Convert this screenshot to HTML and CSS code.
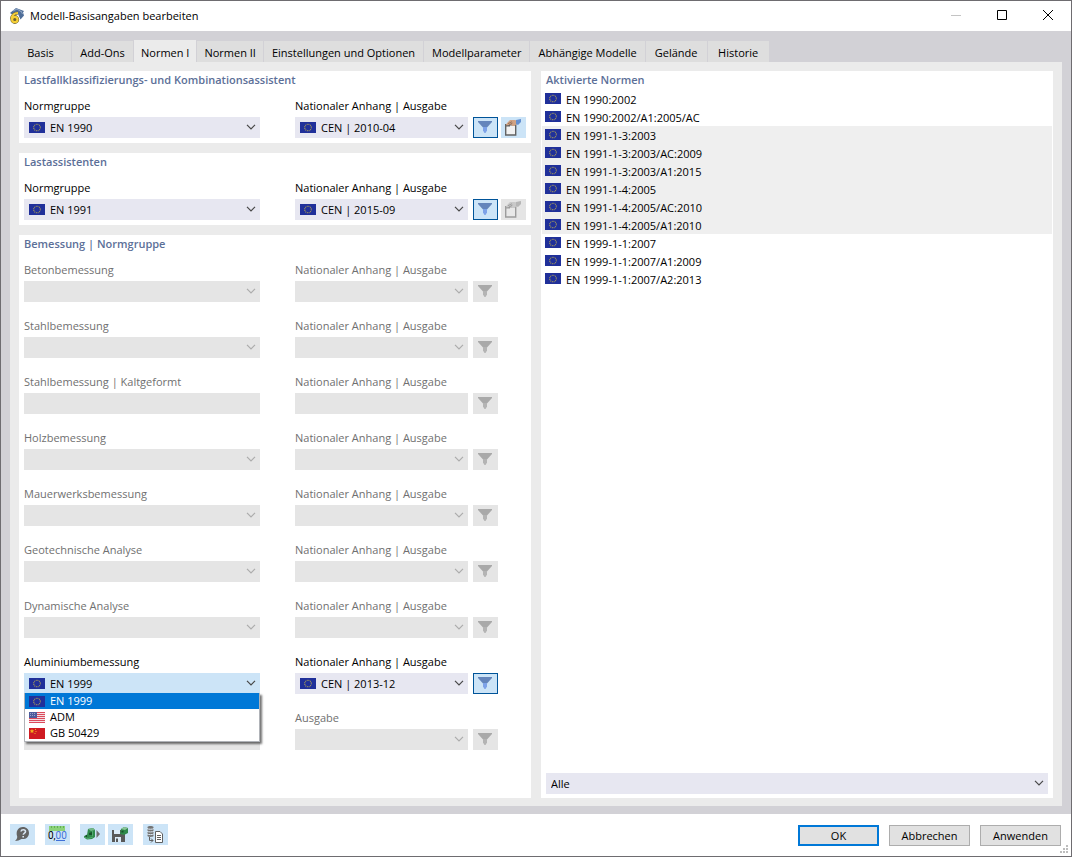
FILE: index.html
```html
<!DOCTYPE html>
<html lang="de">
<head>
<meta charset="utf-8">
<title>Modell-Basisangaben bearbeiten</title>
<link rel="stylesheet" href="styles.css">
</head>
<body>
<svg class="defs" aria-hidden="true">
  <symbol id="eu" viewBox="0 0 16 11"><path fill="#20309a" d="M0 0h16v11H0z"/><circle cx="8" cy="5.500" r="3.300" fill="none" stroke="#a89c58" stroke-width="1.100" stroke-dasharray="1 .73"/></symbol>
  <symbol id="us" viewBox="0 0 16 11"><path fill="#f3dfe2" d="M0 0h16v11H0z"/><path stroke="#dc4a5c" stroke-width="1" d="M0 .5h16M0 2.500h16M0 4.500h16M0 6.500h16M0 8.500h16M0 10.500h16"/><path fill="#4d5c9c" d="M0 0h8v6H0z"/><path stroke="#9aa3cb" stroke-dasharray="1 1" d="M1 1.500h6M1 3.500h6"/></symbol>
  <symbol id="cn" viewBox="0 0 16 11"><path fill="#cf1b22" d="M0 0h16v11H0z"/><path fill="#f2b01e" d="m3 1 .7 1.300 1.500.2-1.100 1 .3 1.500L3 4.300 1.600 5l.3-1.500-1.100-1 1.500-.2zM6 1h1v1H6zM6.500 3h1v1h-1zM5.500 5h1v1h-1z"/></symbol>
  <symbol id="chev" viewBox="0 0 10 6"><path d="M1 .8l4 4 4-4" fill="none" stroke="currentColor" stroke-width="1.200"/></symbol>
  <symbol id="filter" viewBox="0 0 14 12"><path d="M0 0h14v1L9 6.500H5L0 1z" fill="var(--funnel-top)"/><path d="M5 6h4v3.500L7.500 12h-1L5 9.500z" fill="var(--funnel-low)"/></symbol>
  <symbol id="hand" viewBox="0 0 18 17"><path d="M1.700 5.700h10v10.300h-10z" fill="var(--box)" stroke="var(--line)" stroke-width="1.400"/><path d="M1 5h5v2.500H1z" fill="var(--line)"/><path d="M3.500 3.500 6 1h4.500L13 1.500V5l-3 2H8L7.500 5.500 5 6 2.500 6.500 2 5.500z" fill="var(--skin)"/><path d="m4 4.700 4-2M5 6l3.500-2" stroke="var(--crease)" stroke-width=".7"/><path d="M12 1 17 0v3l-3 3-2-1z" fill="var(--cuff)"/></symbol>
</svg>
<div class="window">
  <header class="titlebar">
    <svg class="app-icon" viewBox="0 0 16 16"><path d="M1 5 7 0l8 3-1 1.500 1 3-3.500 4L9 6 4 7z" fill="#4f6e99"/><path d="M4 3 8 1l4 2.500M12 3l1.500 3" stroke="#93a9c7" fill="none"/><path d="M9 5C5.500 5 3 7.500 2.500 11" fill="none" stroke="#6b6232" stroke-width="3.200"/><circle cx="5.800" cy="11.500" r="2.700" fill="#6b6232" stroke="#6b6232" stroke-width="3.400"/><path d="M9 5C5.500 5 3 7.500 2.500 11" fill="none" stroke="#f5cf36" stroke-width="2.100"/><circle cx="5.800" cy="11.500" r="2.700" fill="#6b6232" stroke="#f5cf36" stroke-width="2.200"/></svg>
    <h1 class="caption">Modell-Basisangaben bearbeiten</h1>
    <button class="win-btn dim" aria-label="Minimieren" disabled><svg viewBox="0 0 10 10"><path d="M0 5.500h10"/></svg></button>
    <button class="win-btn" aria-label="Maximieren"><svg viewBox="0 0 10 10"><path d="M.5.5h9v9h-9z"/></svg></button>
    <button class="win-btn" aria-label="Schließen"><svg viewBox="0 0 10 10"><path d="m0 0 10 10M10 0 0 10"/></svg></button>
  </header>
  <main class="body">
    <nav class="tabs" role="tablist">
      <button class="tab" role="tab">Basis</button>
      <button class="tab" role="tab">Add-Ons</button>
      <button class="tab active" role="tab" aria-selected="true">Normen I</button>
      <button class="tab" role="tab">Normen II</button>
      <button class="tab wide" role="tab">Einstellungen und Optionen</button>
      <button class="tab wide" role="tab">Modellparameter</button>
      <button class="tab wide" role="tab">Abhängige Modelle</button>
      <button class="tab wide" role="tab">Gelände</button>
      <button class="tab wide" role="tab">Historie</button>
    </nav>
    <div class="page">
      <div class="column">
        <section class="group">
          <h2 class="heading">Lastfallklassifizierungs- und Kombinationsassistent</h2>
          <div class="fields">
            <div class="field"><label for="g1">Normgruppe</label>
              <div class="combo"><svg class="flag"><use href="#eu"/></svg><select id="g1" class="flagged"><option>EN 1990</option></select><svg class="chev"><use href="#chev"/></svg></div></div>
            <div class="field"><label for="a1">Nationaler Anhang | Ausgabe</label>
              <div class="line"><div class="combo"><svg class="flag"><use href="#eu"/></svg><select id="a1" class="flagged"><option>CEN | 2010-04</option></select><svg class="chev"><use href="#chev"/></svg></div>
              <button class="tool pressed" aria-label="Filter"><svg class="funnel"><use href="#filter"/></svg></button>
              <button class="tool" aria-label="Bearbeiten"><svg class="hand"><use href="#hand"/></svg></button></div></div>
          </div>
        </section>
        <section class="group">
          <h2 class="heading">Lastassistenten</h2>
          <div class="fields">
            <div class="field"><label for="g2">Normgruppe</label>
              <div class="combo"><svg class="flag"><use href="#eu"/></svg><select id="g2" class="flagged"><option>EN 1991</option></select><svg class="chev"><use href="#chev"/></svg></div></div>
            <div class="field"><label for="a2">Nationaler Anhang | Ausgabe</label>
              <div class="line"><div class="combo"><svg class="flag"><use href="#eu"/></svg><select id="a2" class="flagged"><option>CEN | 2015-09</option></select><svg class="chev"><use href="#chev"/></svg></div>
              <button class="tool pressed" aria-label="Filter"><svg class="funnel"><use href="#filter"/></svg></button>
              <button class="tool" aria-label="Bearbeiten" disabled><svg class="hand"><use href="#hand"/></svg></button></div></div>
          </div>
        </section>
        <section class="group grow">
          <h2 class="heading">Bemessung | Normgruppe</h2>
          <div class="fields">
            <div class="field off"><label for="g3">Betonbemessung</label>
              <div class="combo"><select id="g3" disabled></select><svg class="chev"><use href="#chev"/></svg></div></div>
            <div class="field off"><label for="a3">Nationaler Anhang | Ausgabe</label>
              <div class="line"><div class="combo"><select id="a3" disabled></select><svg class="chev"><use href="#chev"/></svg></div>
              <button class="tool" aria-label="Filter" disabled><svg class="funnel"><use href="#filter"/></svg></button></div></div>

            <div class="field off"><label for="g4">Stahlbemessung</label>
              <div class="combo"><select id="g4" disabled></select><svg class="chev"><use href="#chev"/></svg></div></div>
            <div class="field off"><label for="a4">Nationaler Anhang | Ausgabe</label>
              <div class="line"><div class="combo"><select id="a4" disabled></select><svg class="chev"><use href="#chev"/></svg></div>
              <button class="tool" aria-label="Filter" disabled><svg class="funnel"><use href="#filter"/></svg></button></div></div>

            <div class="field off"><label for="g5">Stahlbemessung | Kaltgeformt</label>
              <div class="combo"><select id="g5" disabled></select></div></div>
            <div class="field off"><label for="a5">Nationaler Anhang | Ausgabe</label>
              <div class="line"><div class="combo"><select id="a5" disabled></select></div>
              <button class="tool" aria-label="Filter" disabled><svg class="funnel"><use href="#filter"/></svg></button></div></div>

            <div class="field off"><label for="g6">Holzbemessung</label>
              <div class="combo"><select id="g6" disabled></select><svg class="chev"><use href="#chev"/></svg></div></div>
            <div class="field off"><label for="a6">Nationaler Anhang | Ausgabe</label>
              <div class="line"><div class="combo"><select id="a6" disabled></select><svg class="chev"><use href="#chev"/></svg></div>
              <button class="tool" aria-label="Filter" disabled><svg class="funnel"><use href="#filter"/></svg></button></div></div>

            <div class="field off"><label for="g7">Mauerwerksbemessung</label>
              <div class="combo"><select id="g7" disabled></select><svg class="chev"><use href="#chev"/></svg></div></div>
            <div class="field off"><label for="a7">Nationaler Anhang | Ausgabe</label>
              <div class="line"><div class="combo"><select id="a7" disabled></select><svg class="chev"><use href="#chev"/></svg></div>
              <button class="tool" aria-label="Filter" disabled><svg class="funnel"><use href="#filter"/></svg></button></div></div>

            <div class="field off"><label for="g8">Geotechnische Analyse</label>
              <div class="combo"><select id="g8" disabled></select><svg class="chev"><use href="#chev"/></svg></div></div>
            <div class="field off"><label for="a8">Nationaler Anhang | Ausgabe</label>
              <div class="line"><div class="combo"><select id="a8" disabled></select><svg class="chev"><use href="#chev"/></svg></div>
              <button class="tool" aria-label="Filter" disabled><svg class="funnel"><use href="#filter"/></svg></button></div></div>

            <div class="field off"><label for="g9">Dynamische Analyse</label>
              <div class="combo"><select id="g9" disabled></select><svg class="chev"><use href="#chev"/></svg></div></div>
            <div class="field off"><label for="a9">Nationaler Anhang | Ausgabe</label>
              <div class="line"><div class="combo"><select id="a9" disabled></select><svg class="chev"><use href="#chev"/></svg></div>
              <button class="tool" aria-label="Filter" disabled><svg class="funnel"><use href="#filter"/></svg></button></div></div>

            <div class="field"><label for="g10">Aluminiumbemessung</label>
              <div class="combo open"><svg class="flag"><use href="#eu"/></svg><select id="g10" class="flagged"><option>EN 1999</option><option>ADM</option><option>GB 50429</option></select><svg class="chev"><use href="#chev"/></svg>
                <ul class="menu" role="listbox" aria-label="Aluminiumbemessung">
                  <li class="choice selected" role="option" aria-selected="true"><svg><use href="#eu"/></svg>EN 1999</li>
                  <li class="choice" role="option"><svg><use href="#us"/></svg>ADM</li>
                  <li class="choice" role="option"><svg><use href="#cn"/></svg>GB 50429</li>
                </ul></div></div>
            <div class="field"><label for="a10">Nationaler Anhang | Ausgabe</label>
              <div class="line"><div class="combo"><svg class="flag"><use href="#eu"/></svg><select id="a10" class="flagged"><option>CEN | 2013-12</option></select><svg class="chev"><use href="#chev"/></svg></div>
              <button class="tool pressed" aria-label="Filter"><svg class="funnel"><use href="#filter"/></svg></button></div></div>

            <div class="field off bottom">
              <div class="combo"><select aria-label="Normgruppe" disabled></select></div></div>
            <div class="field off"><label for="a11">Ausgabe</label>
              <div class="line"><div class="combo"><select id="a11" disabled></select><svg class="chev"><use href="#chev"/></svg></div>
              <button class="tool" aria-label="Filter" disabled><svg class="funnel"><use href="#filter"/></svg></button></div></div>
          </div>
        </section>
      </div>
      <div class="column">
        <section class="group grow standards">
          <h2 class="heading">Aktivierte Normen</h2>
          <ul class="norms">
            <li><svg><use href="#eu"/></svg>EN 1990:2002</li>
            <li><svg><use href="#eu"/></svg>EN 1990:2002/A1:2005/AC</li>
            <li class="shade"><svg><use href="#eu"/></svg>EN 1991-1-3:2003</li>
            <li class="shade"><svg><use href="#eu"/></svg>EN 1991-1-3:2003/AC:2009</li>
            <li class="shade"><svg><use href="#eu"/></svg>EN 1991-1-3:2003/A1:2015</li>
            <li class="shade"><svg><use href="#eu"/></svg>EN 1991-1-4:2005</li>
            <li class="shade"><svg><use href="#eu"/></svg>EN 1991-1-4:2005/AC:2010</li>
            <li class="shade"><svg><use href="#eu"/></svg>EN 1991-1-4:2005/A1:2010</li>
            <li><svg><use href="#eu"/></svg>EN 1999-1-1:2007</li>
            <li><svg><use href="#eu"/></svg>EN 1999-1-1:2007/A1:2009</li>
            <li><svg><use href="#eu"/></svg>EN 1999-1-1:2007/A2:2013</li>
          </ul>
          <div class="combo"><select aria-label="Normen anzeigen"><option>Alle</option></select><svg class="chev"><use href="#chev"/></svg></div>
        </section>
      </div>
    </div>
  </main>
  <footer class="footer">
    <div class="icons">
      <button class="tool" aria-label="Hilfe"><svg viewBox="0 0 25 21"><path d="M5 17c2-2 2.300-3 2.200-4.500C5.500 7.500 8 3 12.800 3 16.500 3 19 5.500 19 9c0 4.200-3.500 6.700-7.500 6-2 1.300-4 2-6.500 2z" fill="#636363"/><path d="M11 7.500c.3-2.300 4.500-2.300 4.500 0 0 1.600-2.200 1.500-2.200 3.300M13.200 12v1.500" fill="none" stroke="#d9e6f2" stroke-width="1.600"/></svg></button>
      <button class="tool" aria-label="Einheiten und Dezimalstellen"><svg viewBox="0 0 25 21"><path d="M4 2h16v5H4z" fill="#8bd37a"/><path d="M6.500 2v2M9.500 2v2M12.500 2v2M15.500 2v2M18.500 2v2" stroke="#5ba64c" stroke-width=".8"/><path d="M11 16.500h9" stroke="#3f70d8"/><text class="digits" x="3" y="15">0,<tspan fill="#3f70d8">00</tspan></text></svg></button>
      <button class="tool" aria-label="Modell laden"><svg viewBox="0 0 25 21"><path d="m8 5 5-1 2 2v7l-3 2-5 .500-3-2V12l3-1z" fill="#2f8a4b"/><path d="m8 5 5-1 2 2-4 1z" fill="#74b887"/><path d="m5 12 2-1.500V14zM9 9l3-1v3H9z" fill="#17512b"/><path d="m4 13 4 1.500 5-1.500M12.500 7v5" fill="none" stroke="#5cb277" stroke-width=".8"/><path d="m16.500 6 3.500 4-3.500 4z" fill="#707070"/></svg></button>
      <button class="tool joined" aria-label="Als Standard speichern"><svg viewBox="0 0 25 21"><path d="M4 6h11l2 3v9H4z" fill="#595959"/><path d="M6 6h6v4H6zM7 13h6v5H7z" fill="#dcebf8"/><path d="M8 14.500h2V18H8z" fill="#595959"/><path d="m13 5 3-2 4 1v5l-4 2-4-1z" fill="#2f8a4b"/><path d="m13 5 3-2 4 1-3 2z" fill="#8bc59a"/><path d="m13.500 7 2-.5v2h-2z" fill="#17512b"/></svg></button>
      <button class="tool" aria-label="Daten übernehmen"><svg viewBox="0 0 25 21"><path d="M4.500 3c1-1.200 5-1.200 6 0v9c-1 1.200-5 1.200-6 0z" fill="#747474"/><path d="M4 4.500c1.500 1 5.500 1 7 0m-7 2.700c1.500 1 5.500 1 7 0m-7 2.700c1.500 1 5.500 1 7 0" fill="none" stroke="#dcebf8"/><path d="M6.500 13v3.500H10m-2-2 2 2-2 2" fill="none" stroke="#606060"/><path d="M12.500 7.500h4.500l2.500 2.500v8.500h-7z" fill="#fff" stroke="#606060"/><path d="M14 11.500h4m-4 2h4m-4 2h4" stroke="#606060"/></svg></button>
    </div>
    <div class="actions">
      <button class="action default">OK</button>
      <button class="action">Abbrechen</button>
      <button class="action">Anwenden</button>
    </div>
    <svg class="grip" viewBox="0 0 8 8"><path d="M6 0h2v2H6zM3 3h2v2H3zM6 3h2v2H6zM0 6h2v2H0zM3 6h2v2H3zM6 6h2v2H6z" fill="#bdbdbd"/></svg>
  </footer>
</div>
</body>
</html>
```
FILE: styles.css
```css
* { box-sizing: border-box; }

body {
  margin: 0;
  font: 11px/16px "Open Sans", "Noto Sans", sans-serif;
  color: #000;
}

button, select { font: inherit; color: inherit; margin: 0; }
svg { display: block; flex: none; }
.defs { position: absolute; width: 0; height: 0; }

.window {
  display: flex;
  flex-direction: column;
  min-height: 100vh;
  border: 1px solid #6e6c70;
  background: #fff;
}

.titlebar { display: flex; align-items: center; height: 30px; padding-left: 8px; }
.app-icon { width: 16px; height: 16px; }
.caption { flex: 1; margin: 0 0 0 5px; font-size: 11px; font-weight: 400; }
.win-btn { display: grid; place-items: center; width: 46px; height: 30px; padding: 0 0 2px; border: 0; background: none; }
.win-btn svg { width: 10px; height: 10px; fill: none; stroke: #000; overflow: visible; }
.win-btn.dim svg { stroke: #c4c4c4; }

.body { flex: 1; display: flex; flex-direction: column; padding: 9px 9px 8px; background: #d2d1d6; }
.tabs { display: flex; align-items: flex-end; gap: 1px; }
.tab { min-width: 61px; height: 21px; padding: 2px 7px 0; border: 0; background: #dedede; white-space: nowrap; }
.tab.wide { padding: 2px 8px 0; }
.tab.active { height: 22px; padding-top: 3px; background: #ebebeb; }

.page { flex: 1; display: flex; gap: 10px; padding: 9px 9px 8px; background: #ebebeb; }
.column { flex: 1; min-width: 0; display: flex; flex-direction: column; gap: 10px; }
.group { display: flex; flex-direction: column; padding: 0 5px 5px; background: #fff; }
.group.grow { flex: 1; }
.group.standards { padding-bottom: 4px; }
.heading { margin: 0; font-size: 11px; line-height: 18px; font-weight: 600; color: #5c6f98; }

.fields { display: grid; grid-template-columns: 236fr 231fr; gap: 16px 35px; margin-top: 9px; }
.field { min-width: 0; display: flex; flex-direction: column; gap: 3px; }
.field.off { color: #707070; }
.field.bottom { justify-content: flex-end; }
.line { display: grid; grid-template-columns: 1fr 25px 25px; gap: 3px; }
.line .combo { margin-right: 2px; }

.combo { position: relative; height: 21px; }
.combo select {
  width: 100%;
  height: 100%;
  padding: 0 24px 0 5px;
  border: 0;
  border-radius: 0;
  appearance: none;
  background: #e7e7f1;
}
.combo select.flagged { padding-left: 26px; }
.combo select:disabled { background: #e5e5e5; opacity: 1; }
.combo.open select { background: #cce4f7; }
.flag { position: absolute; left: 5px; top: 5px; width: 16px; height: 11px; pointer-events: none; }
.chev { position: absolute; right: 4px; top: 7px; width: 10px; height: 6px; color: #484848; pointer-events: none; }
.off .chev { color: #acacac; }

.menu {
  position: absolute;
  z-index: 1;
  top: 20px;
  left: 0;
  right: 0;
  margin: 0;
  padding: 0;
  list-style: none;
  border: 1px solid #b0b3b8;
  border-top: 0;
  background: #fff;
  box-shadow: 2px 2px 2px #0000008c;
}
.choice { display: flex; align-items: center; gap: 5px; padding-left: 4px; }
.choice svg { width: 16px; height: 11px; }
.choice.selected { background: #0078d7; color: #fff; }

.tool { height: 21px; width: 25px; padding: 0 1px 1px 0; display: grid; place-items: center; border: 0; background: #cce4f7; --funnel-top: #6485bb; --funnel-low: #7da2e8; --box: #f2f2f2; --line: #626262; --skin: #d1a384; --crease: #805f4c; --cuff: #648fd0; }
.tool:disabled { background: #e5e5e5; --funnel-top: #a9a9a9; --funnel-low: #b4b4b4; --box: #e8e8e8; --line: #9c9c9c; --skin: #c9c9c9; --crease: #8e8e8e; --cuff: #b6b6b6; }
.tool.pressed { border: 1px solid #005499; }
.funnel { width: 14px; height: 12px; }
.hand { width: 18px; height: 17px; }

.norms { flex: 1; margin: 1px -4px 0; padding: 0; list-style: none; }
.norms li { display: flex; align-items: center; gap: 5px; height: 18px; padding: 2px 0 0 3px; }
.norms svg { width: 16px; height: 11px; margin-bottom: 4px; }
.norms .shade { background: #efefef; }

.footer { position: relative; display: flex; justify-content: space-between; padding: 10px 10px 10px 9px; }
.icons { display: flex; gap: 10px; }
.icons .tool { padding: 0; }
.icons .tool svg { width: 25px; height: 21px; }
.icons .joined { margin-left: -7px; }
.digits { font-size: 10px; font-family: Roboto, "Open Sans", sans-serif; }
.actions { display: flex; gap: 10px; padding-top: 1px; }
.action { width: 81px; height: 21px; padding: 0; border: 1px solid #adadad; background: #e1e1e1; }
.action.default { border: 2px solid #0078d7; }
.grip { position: absolute; right: 3px; bottom: 3px; width: 8px; height: 8px; }
```
